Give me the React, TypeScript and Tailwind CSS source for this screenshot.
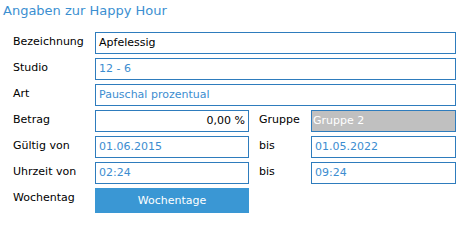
import React from "react";

const box = "h-[22px] border border-[#2e7cbd] text-[11px] leading-[20px] whitespace-nowrap overflow-hidden";
const label = "text-[11px] leading-[20px] text-black";

const Field = ({ value, dim = false, align = "left" }: { value: string; dim?: boolean; align?: "left" | "right" }) => (
  <div className={`${box} px-[3px] ${dim ? "text-[#3c8dd0]" : "text-black"} ${align === "right" ? "text-right" : ""}`}>{value}</div>
);

export default function App() {
  return (
    <div className="w-[476px] h-[217px] bg-white" style={{ fontFamily: '"DejaVu Sans", Verdana, sans-serif' }}>
      <div className="pl-[3px] pt-[2px] h-[32px] text-[13px] leading-[18px] text-[#3b8fd1]">Angaben zur Happy Hour</div>
      <div className="pl-[13px] pr-[20px] grid grid-cols-[82px_154px_62px_145px] gap-y-[4px]">
        <div className={label}>Bezeichnung</div>
        <div className="col-span-3"><Field value="Apfelessig" /></div>

        <div className={label}>Studio</div>
        <div className="col-span-3"><Field value="12 - 6" dim /></div>

        <div className={label}>Art</div>
        <div className="col-span-3"><Field value="Pauschal prozentual" dim /></div>

        <div className={label}>Betrag</div>
        <Field value="0,00 %" align="right" />
        <div className={`${label} pl-[10px]`}>Gruppe</div>
        <div className={`${box} pl-[1px] bg-[#c0c0c0] text-white`}>Gruppe 2</div>

        <div className={label}>Gültig von</div>
        <Field value="01.06.2015" dim />
        <div className={`${label} pl-[10px]`}>bis</div>
        <Field value="01.05.2022" dim />

        <div className={label}>Uhrzeit von</div>
        <Field value="02:24" dim />
        <div className={`${label} pl-[10px]`}>bis</div>
        <Field value="09:24" dim />

        <div className={label}>Wochentag</div>
        <button className="h-[25px] bg-[#3a97d4] text-white text-[11px] leading-[25px] cursor-pointer">Wochentage</button>
      </div>
    </div>
  );
}
